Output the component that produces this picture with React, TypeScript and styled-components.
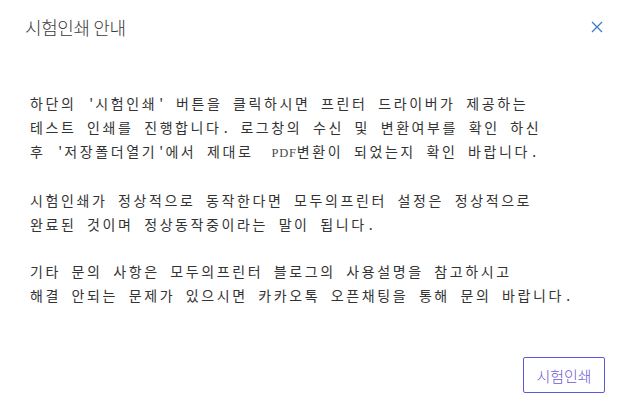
import React from "react";
import styled, { createGlobalStyle } from "styled-components";

const GlobalStyle = createGlobalStyle`
  html, body {
    margin: 0;
    padding: 0;
    background: #fff;
  }
  * {
    box-sizing: border-box;
  }
`;

// STYLED COMPONENTS
const Dialog = styled.div`
  width: 629px;
  height: 402px;
  display: flex;
  flex-direction: column;
  background: #fff;
  font-family: "Noto Sans CJK KR", "Noto Sans", sans-serif;
`;

const Header = styled.div`
  display: flex;
  align-items: center;
  justify-content: space-between;
  height: 54px;
  padding: 0 22px 0 25px;
`;

const Title = styled.h2`
  margin: 0;
  font-size: 18px;
  font-weight: 300;
  color: #3a3a3a;
  letter-spacing: -0.4px;
`;

const CloseButton = styled.button`
  display: flex;
  align-items: center;
  justify-content: center;
  width: 20px;
  height: 20px;
  padding: 0;
  border: none;
  background: transparent;
  cursor: pointer;
`;

const Body = styled.div`
  flex: 1;
  padding: 37px 24px 0 30px;
  display: flex;
  flex-direction: column;
  gap: 23px;
`;

const Paragraph = styled.p`
  margin: 0;
  font-size: 14px;
  line-height: 24px;
  color: #333;
  letter-spacing: 2.6px;
  word-spacing: 4.9px;
  white-space: pre;
`;

// half-width cell for ascii characters, like a fixed-width console font
const Ascii = styled.span<{ $cells?: number }>`
  display: inline-block;
  width: ${(p) => (p.$cells ?? 1) * 8.2}px;
  text-align: center;
  letter-spacing: 0;
`;

const Latin = styled(Ascii)`
  font-family: "Liberation Serif", serif;
  font-size: 12.5px;
  letter-spacing: 0.8px;
  text-align: right;
  color: #4a4a4a;
`;

const Footer = styled.div`
  display: flex;
  justify-content: flex-end;
  padding: 0 24px 9px 0;
`;

const PrintButton = styled.button`
  height: 36px;
  width: 82px;
  padding: 0;
  border: 1px solid #5c58e0;
  border-radius: 2px;
  background: #fff;
  color: #6a5ad8;
  font-family: "Noto Sans CJK KR", sans-serif;
  font-size: 15px;
  font-weight: 300;
  cursor: pointer;
`;

const Q = () => <Ascii>'</Ascii>;
const Dot = () => <Ascii>.</Ascii>;

export default function App() {
  return (
    <>
      <GlobalStyle />
      <Dialog>
        <Header>
          <Title>시험인쇄 안내</Title>
          <CloseButton aria-label="닫기">
            <svg width="12" height="12" viewBox="0 0 12 12">
              <path d="M1 1L11 11M11 1L1 11" stroke="#3f7cc4" strokeWidth="1.3" fill="none" />
            </svg>
          </CloseButton>
        </Header>
        <Body>
          <Paragraph>
            {"하단의 "}<Q />{"시험인쇄"}<Q />{" 버튼을 클릭하시면 프린터 드라이버가 제공하는\n"}
            {"테스트 인쇄를 진행합니다"}<Dot />{" 로그창의 수신 및 변환여부를 확인 하신\n"}
            {"후 "}<Q />{"저장폴더열기"}<Q />{"에서 제대로 "}
            <Latin $cells={4}>PDF</Latin>
            {"변환이 되었는지 확인 바랍니다"}<Dot />
          </Paragraph>
          <Paragraph>
            {"시험인쇄가 정상적으로 동작한다면 모두의프린터 설정은 정상적으로\n"}
            {"완료된 것이며 정상동작중이라는 말이 됩니다"}<Dot />
          </Paragraph>
          <Paragraph>
            {"기타 문의 사항은 모두의프린터 블로그의 사용설명을 참고하시고\n"}
            {"해결 안되는 문제가 있으시면 카카오톡 오픈채팅을 통해 문의 바랍니다"}<Dot />
          </Paragraph>
        </Body>
        <Footer>
          <PrintButton>시험인쇄</PrintButton>
        </Footer>
      </Dialog>
    </>
  );
}
